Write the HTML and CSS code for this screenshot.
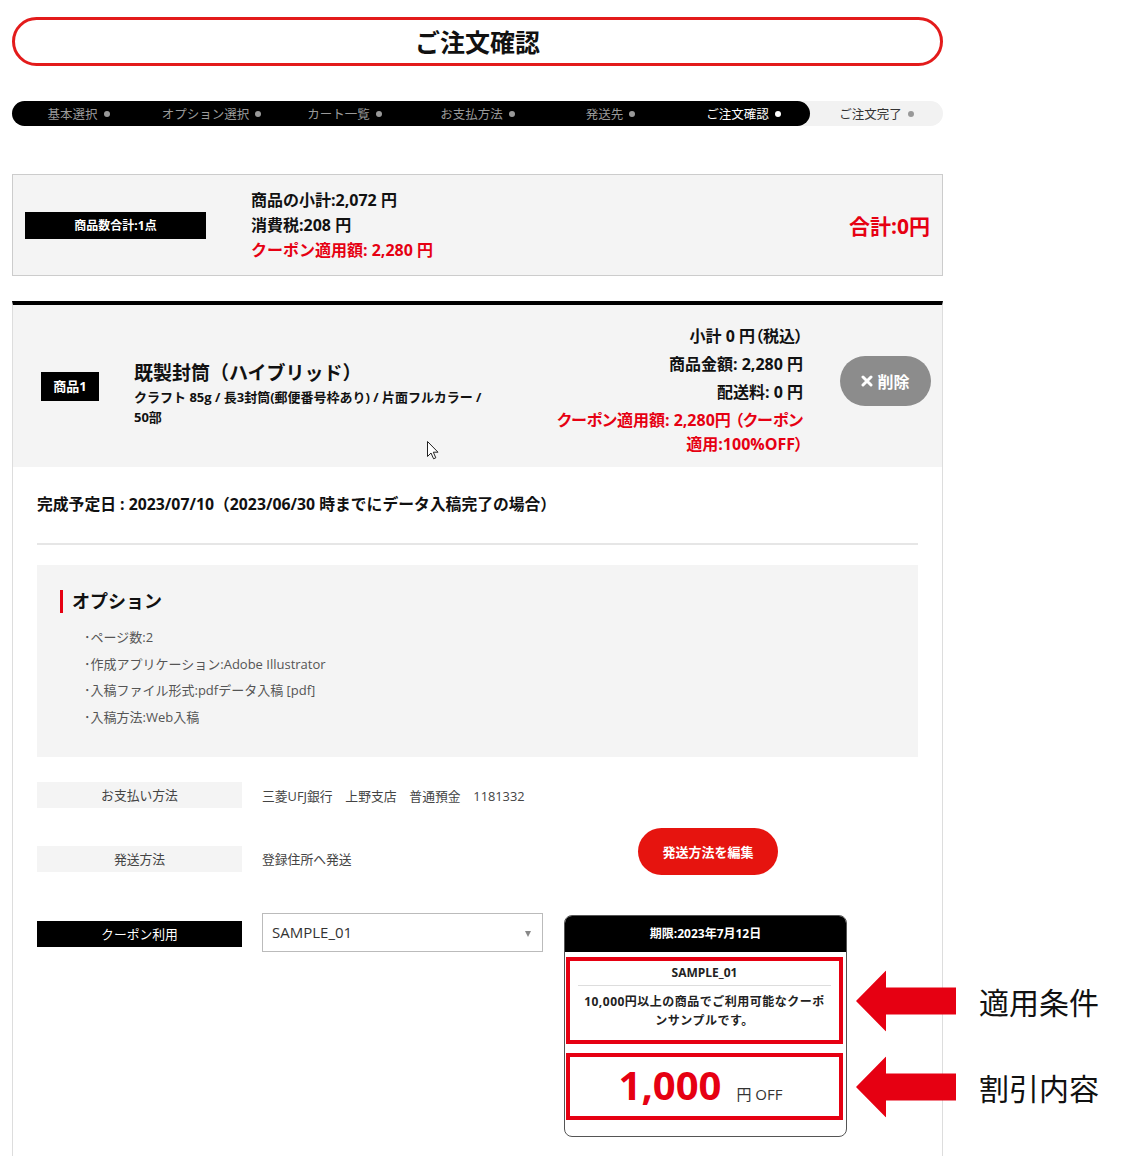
FILE: index.html
```html
<!DOCTYPE html>
<html lang="ja">
	<head>
		<meta charset="UTF-8" />
		<meta name="viewport" content="width=device-width, initial-scale=1.0" />
		<title>ご注文確認</title>
		<link rel="stylesheet" href="styles.css">
	</head>

	<body>
		<div id="page">
			<h1 class="pageTitle">ご注文確認</h1>

			<!-- 進捗バー -->
			<ol class="steps">
				<li class="done first">基本選択<span class="dot"></span></li>
				<li class="done">オプション選択<span class="dot"></span></li>
				<li class="done">カート一覧<span class="dot"></span></li>
				<li class="done">お支払方法<span class="dot"></span></li>
				<li class="done">発送先<span class="dot"></span></li>
				<li class="done current">ご注文確認<span class="dot"></span></li>
				<li>ご注文完了<span class="dot"></span></li>
			</ol>

			<div class="summary">
				<div class="countLabel">商品数合計:1点</div>
				<div class="subtotals">
					<p>商品の小計:2,072 円</p>
					<p>消費税:208 円</p>
					<p class="red">クーポン適用額: 2,280 円</p>
				</div>
				<div class="grandTotal">合計:0円</div>
			</div>

			<div class="item">
				<div class="itemHead">
					<div class="itemNo">商品1</div>
					<div class="itemName">
						<h2>既製封筒（ハイブリッド）</h2>
						<p>クラフト 85g / 長3封筒(郵便番号枠あり) / 片面フルカラー / 50部</p>
					</div>
					<div class="itemPrice">
						<p>小計 0 円（税込）</p>
						<p>商品金額: 2,280 円</p>
						<p>配送料: 0 円</p>
						<p class="red">クーポン適用額: 2,280円 （クーポン<br>適用:100%OFF）</p>
					</div>
					<button class="deleteBtn" type="button">
						<svg width="12" height="12" viewBox="0 0 12 12"><path d="M2 2 L10 10 M10 2 L2 10" stroke="#fff" stroke-width="3" stroke-linecap="round"/></svg>削除
					</button>
					<!-- マウスカーソル -->
					<svg class="cursor" width="12" height="19" viewBox="0 0 12 19"><path d="M0.5 0.5 L0.5 15.5 L4 12 L6.6 17.8 L8.8 16.8 L6.3 11.2 L11 11.2 Z" fill="#fff" stroke="#222" stroke-width="1" stroke-linejoin="round"/></svg>
				</div>

				<div class="itemBody">
					<p class="due">完成予定日 : 2023/07/10（2023/06/30 時までにデータ入稿完了の場合）</p>

					<div class="options">
						<h3>オプション</h3>
						<ul>
							<li>･ページ数:2</li>
							<li>･作成アプリケーション:Adobe Illustrator</li>
							<li>･入稿ファイル形式:pdfデータ入稿 [pdf]</li>
							<li>･入稿方法:Web入稿</li>
						</ul>
					</div>

					<div class="infoRow payRow">
						<div class="infoLabel">お支払い方法</div>
						<div class="infoValue">三菱UFJ銀行　上野支店　普通預金　1181332</div>
					</div>

					<div class="infoRow shipRow">
						<div class="infoLabel">発送方法</div>
						<div class="infoValue">登録住所へ発送</div>
						<button class="editBtn" type="button">発送方法を編集</button>
					</div>

					<div class="infoRow couponRow">
						<div class="infoLabel black">クーポン利用</div>
						<div class="selectBox">SAMPLE_01</div>
						<div class="couponCard">
							<div class="couponHead">期限:2023年7月12日</div>
							<div class="markBox condition">
								<p class="couponCode">SAMPLE_01</p>
								<p class="couponText">10,000円以上の商品でご利用可能なクーポンサンプルです。</p>
								<div class="note">
									<svg width="100" height="61" viewBox="0 0 100 61"><polygon points="0,30.5 30,0 30,17 100,17 100,44 30,44 30,61" fill="#e60012"/></svg>
									<span>適用条件</span>
								</div>
							</div>
							<div class="markBox discount">
								<span class="amount">1,000</span><span class="unit">円 OFF</span>
								<div class="note">
									<svg width="100" height="61" viewBox="0 0 100 61"><polygon points="0,30.5 30,0 30,17 100,17 100,44 30,44 30,61" fill="#e60012"/></svg>
									<span>割引内容</span>
								</div>
							</div>
						</div>
					</div>
				</div>
			</div>
		</div>
	</body>
</html>
```

FILE: styles.css
```css
* {
	margin: 0;
	padding: 0;
	box-sizing: border-box;
}

html, body {
	width: 100%;
	height: 100%;
}
body {
	font-family: "Open Sans", "Noto Sans CJK JP", sans-serif;
	color: #111;
	background: #fff;
	overflow: hidden;
}
#page {
	width: 931px;
	margin-left: 12px;
	padding-top: 17px;
}
.red {
	color: #e60012;
}

/* タイトル */
.pageTitle {
	height: 49px;
	border: 3px solid #e31b1b;
	border-radius: 25px;
	text-align: center;
	font-size: 25px;
	line-height: 42px;
	font-weight: bold;
	font-family: "Noto Sans CJK JP", sans-serif;
}

/* steps */
.steps {
	margin-top: 35px;
	list-style: none;
	display: grid;
	grid-template-columns: repeat(7, 1fr);
	height: 25px;
	background: #f2f2f2;
	border-radius: 13px;
}
.steps li {
	display: flex;
	justify-content: center;
	align-items: center;
	gap: 6px;
	font-size: 12.5px;
	color: #333;
	font-family: "Noto Sans CJK JP", sans-serif;
}
.steps .dot {
	width: 6px;
	height: 6px;
	border-radius: 50%;
	background: #999;
}
.steps li.done {
	background: #000;
	color: #9a9a9a;
}
.steps li.first {
	border-radius: 13px 0 0 13px;
}
.steps li.current {
	color: #fff;
	border-radius: 0 13px 13px 0;
}
.steps li.current .dot {
	background: #fff;
}

/* summary */
.summary {
	margin-top: 48px;
	height: 102px;
	background: #f4f4f4;
	border: 1px solid #ccc;
	display: flex;
	align-items: center;
	padding: 0 12px;
}
.countLabel {
	width: 181px;
	height: 27px;
	background: #000;
	color: #fff;
	font-size: 12px;
	font-weight: bold;
	text-align: center;
	line-height: 27px;
}
.subtotals {
	margin-left: 45px;
	font-size: 16px;
	font-weight: bold;
	line-height: 25px;
}
.grandTotal {
	margin-left: auto;
	color: #e60012;
	font-size: 21px;
	font-weight: bold;
}

/* item */
.item {
	margin-top: 25px;
	border-top: 4px solid #000;
	border-left: 1px solid #ddd;
	border-right: 1px solid #ddd;
}
.itemHead {
	position: relative;
	height: 162px;
	background: #f4f4f4;
	display: flex;
	align-items: center;
	padding: 0 11px 0 28px;
}
.itemNo {
	width: 58px;
	height: 29px;
	background: #000;
	color: #fff;
	font-size: 13px;
	font-weight: bold;
	text-align: center;
	line-height: 29px;
}
.itemName {
	margin-left: 35px;
	width: 362px;
	padding-top: 14px;
}
.itemName h2 {
	font-size: 19px;
	line-height: 28px;
	font-weight: bold;
}
.itemName p {
	font-size: 13px;
	font-weight: bold;
	line-height: 20px;
}
.itemPrice {
	flex: 1;
	text-align: right;
	font-size: 16px;
	font-weight: bold;
	line-height: 24px;
	padding-top: 8px;
	font-feature-settings: "palt";
}
.itemPrice p {
	margin: 4px 0;
}
.deleteBtn {
	margin-left: 37px;
	margin-bottom: 10px;
	width: 91px;
	height: 50px;
	border: none;
	border-radius: 25px;
	background: #8c8c8c;
	color: #fff;
	font-family: inherit;
	font-size: 16px;
	font-weight: bold;
	display: flex;
	align-items: center;
	justify-content: center;
	gap: 4px;
}
.cursor {
	position: absolute;
	left: 414px;
	top: 136px;
}

.itemBody {
	padding: 26px 24px 40px;
}
.due {
	font-size: 15.8px;
	font-weight: bold;
	line-height: 22px;
	padding-bottom: 28px;
	border-bottom: 2px solid #e6e6e6;
}
.options {
	margin-top: 20px;
	background: #f4f4f4;
	padding: 25px 23px 27px;
}
.options h3 {
	border-left: 3px solid #e60012;
	padding-left: 9px;
	font-size: 18px;
	line-height: 23px;
	font-weight: bold;
	margin-bottom: 11px;
}
.options ul {
	list-style: none;
	padding-left: 24px;
	font-size: 13px;
	line-height: 26.5px;
	color: #555;
}

/* info rows */
.infoRow {
	display: grid;
	grid-template-columns: 205px 281px 284px;
	column-gap: 20px;
	font-size: 12.8px;
	color: #444;
}
.infoLabel {
	height: 26px;
	line-height: 26px;
	background: #f4f4f4;
	text-align: center;
}
.infoLabel.black {
	background: #000;
	color: #fff;
	margin-top: 8px;
}
.payRow {
	margin-top: 25px;
	align-items: center;
}
.shipRow {
	margin-top: 20px;
	align-items: start;
}
.shipRow .infoLabel,
.shipRow .infoValue {
	margin-top: 18px;
	line-height: 26px;
}
.editBtn {
	justify-self: center;
	margin-left: 6px;
	width: 140px;
	height: 47px;
	border: none;
	border-radius: 24px;
	background: #e6140f;
	color: #fff;
	font-family: inherit;
	font-size: 13px;
	font-weight: bold;
}
.couponRow {
	margin-top: 38px;
	align-items: start;
}
.selectBox {
	position: relative;
	height: 39px;
	border: 1px solid #bbb;
	padding-left: 9px;
	font-size: 15px;
	line-height: 37px;
	color: #333;
}
.selectBox::after {
	content: "";
	position: absolute;
	right: 11px;
	top: 17px;
	border-left: 3.5px solid transparent;
	border-right: 3.5px solid transparent;
	border-top: 6px solid #888;
}
.couponCard {
	margin-top: 2px;
	margin-left: 1px;
	border: 1px solid #555;
	border-radius: 8px;
	padding-bottom: 16px;
	color: #222;
	font-size: 12px;
}
.couponHead {
	height: 36px;
	line-height: 36px;
	background: #000;
	color: #fff;
	text-align: center;
	font-weight: bold;
	border-radius: 7px 7px 0 0;
}
.markBox {
	position: relative;
	border: 4px solid #e60012;
	margin: 5px 3px 0 1px;
	text-align: center;
}
.condition {
	height: 87px;
	padding: 3px 8px 0;
	font-weight: bold;
}
.couponCode {
	line-height: 18px;
	padding-bottom: 3px;
	border-bottom: 1px solid #ddd;
}
.couponText {
	margin: 6px 4px 0;
	line-height: 19px;
	letter-spacing: 0.5px;
}
.discount {
	margin-top: 9px;
	height: 67px;
	display: flex;
	justify-content: center;
	align-items: baseline;
	padding: 5px 8px 0 0;
	gap: 15px;
}
.amount {
	font-size: 40px;
	font-weight: bold;
	color: #e60012;
	line-height: 46px;
}
.unit {
	font-size: 15px;
	color: #333;
}
.note {
	position: absolute;
	left: calc(100% + 17px);
	top: 50%;
	transform: translateY(-50%);
	display: flex;
	align-items: center;
	gap: 23px;
	white-space: nowrap;
	font-size: 30px;
	font-weight: normal;
	color: #111;
	font-family: "Noto Sans CJK JP", sans-serif;
}
.note svg {
	display: block;
}
```
